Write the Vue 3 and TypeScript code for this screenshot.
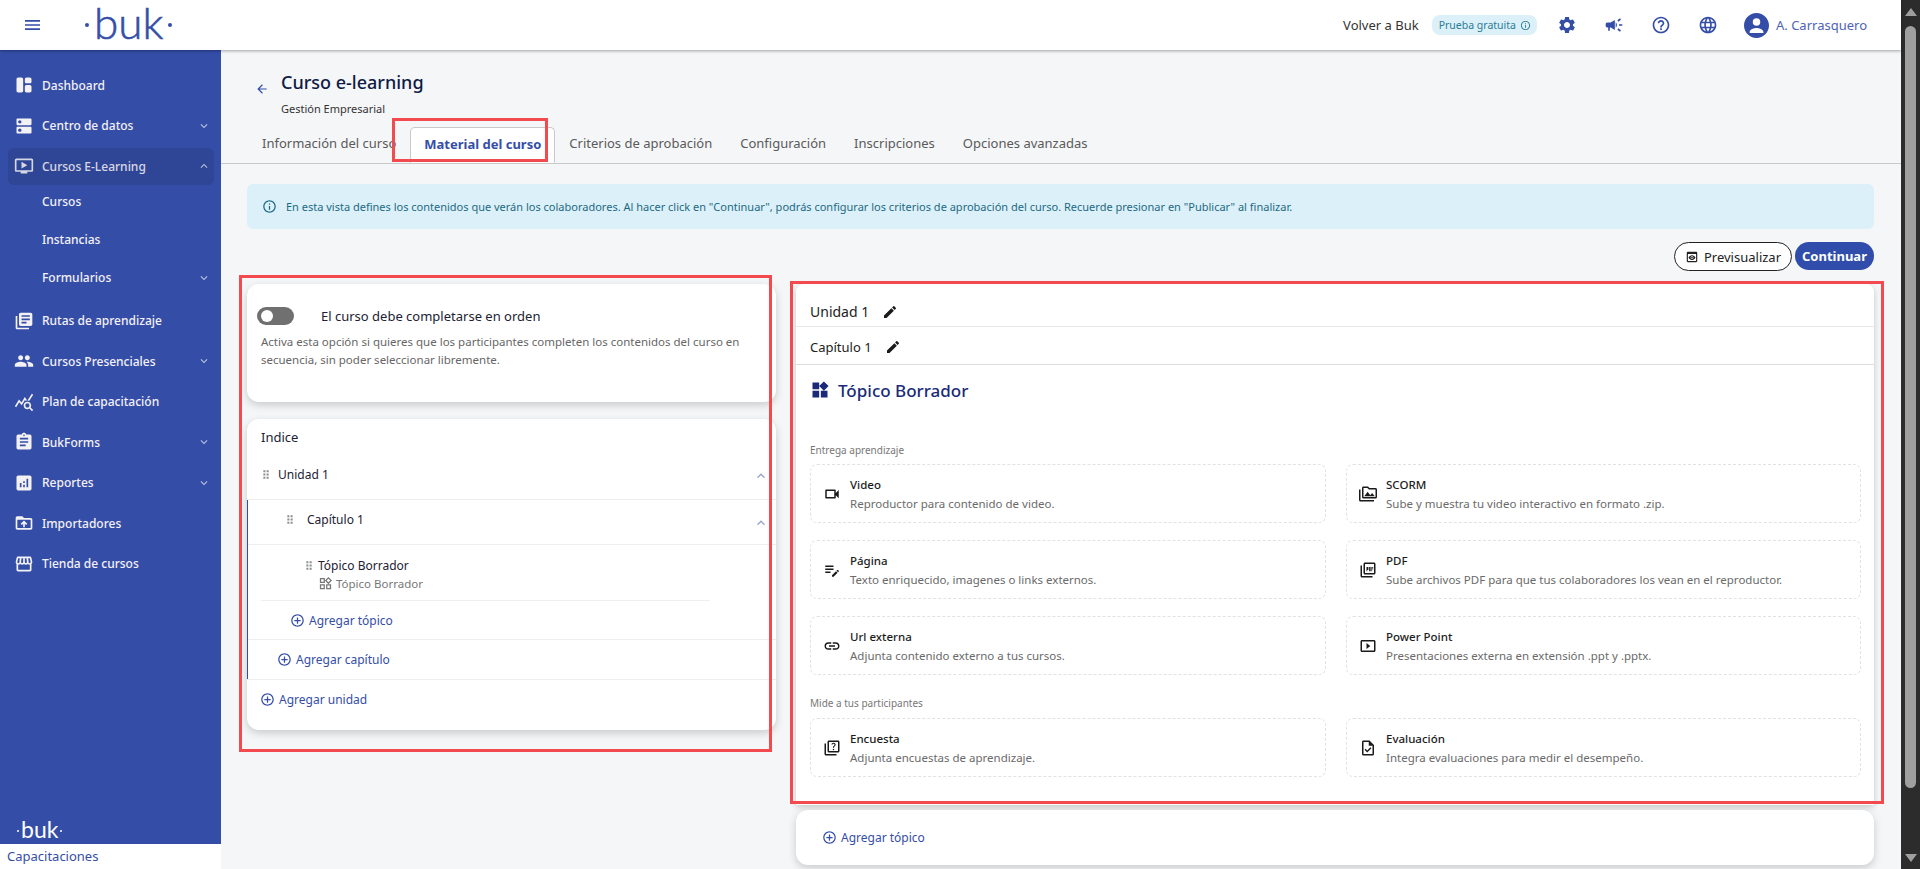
<script setup lang="ts">
const icons: Record<string, string> = {
  menu: 'M3 18h18v-2H3v2zm0-5h18v-2H3v2zm0-7v2h18V6H3z',
  dashboard: 'M9 21H5c-1.1 0-2-.9-2-2V5c0-1.1.9-2 2-2h4c1.1 0 2 .9 2 2v14c0 1.1-.9 2-2 2zm6 0h4c1.1 0 2-.9 2-2v-5c0-1.1-.9-2-2-2h-4c-1.1 0-2 .9-2 2v5c0 1.1.9 2 2 2zm6-13V5c0-1.1-.9-2-2-2h-4c-1.1 0-2 .9-2 2v3c0 1.1.9 2 2 2h4c1.1 0 2-.9 2-2z',
  dns: 'M20 13H4c-.55 0-1 .45-1 1v6c0 .55.45 1 1 1h16c.55 0 1-.45 1-1v-6c0-.55-.45-1-1-1zM7 19c-1.1 0-2-.9-2-2s.9-2 2-2 2 .9 2 2-.9 2-2 2zM20 3H4c-.55 0-1 .45-1 1v6c0 .55.45 1 1 1h16c.55 0 1-.45 1-1V4c0-.55-.45-1-1-1zM7 9c-1.1 0-2-.9-2-2s.9-2 2-2 2 .9 2 2-.9 2-2 2z',
  ondemand: 'M21 3H3c-1.11 0-2 .89-2 2v12c0 1.1.89 2 2 2h5v2h8v-2h5c1.1 0 1.99-.9 1.99-2L23 5c0-1.11-.9-2-2-2zm0 14H3V5h18v12zM16 11l-7 4V7z',
  books: 'M4 6H2v14c0 1.1.9 2 2 2h14v-2H4V6zm16-4H8c-1.1 0-2 .9-2 2v12c0 1.1.9 2 2 2h12c1.1 0 2-.9 2-2V4c0-1.1-.9-2-2-2zm-1 9H9V9h10v2zm-4 4H9v-2h6v2zm4-8H9V5h10v2z',
  people: 'M16 11c1.66 0 2.99-1.34 2.99-3S17.66 5 16 5c-1.66 0-3 1.34-3 3s1.34 3 3 3zm-8 0c1.66 0 2.99-1.34 2.99-3S9.66 5 8 5C6.34 5 5 6.34 5 8s1.34 3 3 3zm0 2c-2.33 0-7 1.17-7 3.5V19h14v-2.5c0-2.33-4.67-3.5-7-3.5zm8 0c-.29 0-.62.02-.97.05 1.16.84 1.97 1.97 1.97 3.45V19h6v-2.5c0-2.33-4.67-3.5-7-3.5z',
  stats: 'M19.88 18.47c.44-.7.7-1.51.7-2.39 0-2.49-2.01-4.5-4.5-4.5s-4.5 2.01-4.5 4.5 2.01 4.5 4.49 4.5c.88 0 1.7-.26 2.39-.7L21.58 23 23 21.58l-3.12-3.11zm-3.8.11c-1.38 0-2.5-1.12-2.5-2.5s1.12-2.5 2.5-2.5 2.5 1.12 2.5 2.5-1.12 2.5-2.5 2.5zm-.36-8.5c-.74.02-1.45.18-2.1.45l-.55-.83-3.8 6.18-3.01-3.52-3.63 5.81L1 17l5-8 3 3.5L13 6l2.72 4.08zm2.59.5c-.64-.28-1.33-.45-2.05-.49L21.38 2 23 3.18l-4.69 7.4z',
  assignment: 'M19 3h-4.18C14.4 1.84 13.3 1 12 1c-1.3 0-2.4.84-2.82 2H5c-1.1 0-2 .9-2 2v14c0 1.1.9 2 2 2h14c1.1 0 2-.9 2-2V5c0-1.1-.9-2-2-2zm-7 0c.55 0 1 .45 1 1s-.45 1-1 1-1-.45-1-1 .45-1 1-1zm2 14H7v-2h7v2zm3-4H7v-2h10v2zm0-4H7V7h10v2z',
  analytics: 'M19 3H5c-1.1 0-2 .9-2 2v14c0 1.1.9 2 2 2h14c1.1 0 2-.9 2-2V5c0-1.1-.9-2-2-2zM9 17H7v-5h2v5zm4 0h-2v-3h2v3zm0-5h-2v-2h2v2zm4 5h-2V7h2v10z',
  folderUp: 'M20 6h-8l-2-2H4c-1.1 0-1.99.9-1.99 2L2 18c0 1.1.9 2 2 2h16c1.1 0 2-.9 2-2V8c0-1.1-.9-2-2-2zm0 12H4V8h16v10zM9.41 14.42 11 12.84V17h2v-4.16l1.59 1.59L16 13.01 12.01 9 8 13.01l1.41 1.41z',
  store: 'M21.9 8.89l-1.05-4.37c-.22-.9-1-1.52-1.91-1.52H5.05c-.9 0-1.69.63-1.9 1.52L2.1 8.89c-.24 1.02-.02 2.06.62 2.88.08.11.19.19.28.29V19c0 1.1.9 2 2 2h14c1.1 0 2-.9 2-2v-6.94c.09-.09.2-.18.28-.28.64-.82.87-1.87.62-2.89zm-2.99-3.9l1.05 4.37c.1.42.01.84-.25 1.17-.14.18-.44.47-.94.47-.61 0-1.14-.49-1.21-1.14L16.98 5l1.93-.01zM13 5h1.96l.54 4.52c.05.39-.07.78-.33 1.07-.22.26-.54.41-.95.41-.67 0-1.22-.59-1.22-1.31V5zM8.49 9.52L9.04 5H11v4.69c0 .72-.55 1.31-1.29 1.31-.34 0-.65-.15-.89-.41-.25-.29-.37-.68-.33-1.07zm-4.45-.16L5.05 5h1.97l-.58 4.86c-.08.65-.6 1.14-1.21 1.14-.49 0-.8-.29-.93-.47-.27-.32-.36-.75-.26-1.17zM5 19v-6.03c.08.01.15.03.23.03.87 0 1.66-.36 2.24-.95.6.6 1.4.95 2.31.95.87 0 1.65-.36 2.23-.93.59.57 1.39.93 2.29.93.84 0 1.64-.35 2.24-.95.58.59 1.37.95 2.24.95.08 0 .15-.02.23-.03V19H5z',
  settings: 'M19.14 12.94c.04-.3.06-.61.06-.94 0-.32-.02-.64-.07-.94l2.03-1.58c.18-.14.23-.41.12-.61l-1.92-3.32c-.12-.22-.37-.29-.59-.22l-2.39.96c-.5-.38-1.03-.7-1.62-.94l-.36-2.54c-.04-.24-.24-.41-.48-.41h-3.84c-.24 0-.43.17-.47.41l-.36 2.54c-.59.24-1.13.57-1.62.94l-2.39-.96c-.22-.08-.47 0-.59.22L2.74 8.87c-.12.21-.08.47.12.61l2.03 1.58c-.05.3-.09.63-.09.94s.02.64.07.94l-2.03 1.58c-.18.14-.23.41-.12.61l1.92 3.32c.12.22.37.29.59.22l2.39-.96c.5.38 1.03.7 1.62.94l.36 2.54c.05.24.24.41.48.41h3.84c.24 0 .44-.17.47-.41l.36-2.54c.59-.24 1.13-.56 1.62-.94l2.39.96c.22.08.47 0 .59-.22l1.92-3.32c.12-.22.07-.47-.12-.61l-2.01-1.58zM12 15.6c-1.98 0-3.6-1.62-3.6-3.6s1.62-3.6 3.6-3.6 3.6 1.62 3.6 3.6-1.62 3.6-3.6 3.6z',
  campaign: 'M18 11v2h4v-2h-4zm-2 6.61c.96.71 2.21 1.65 3.2 2.39.4-.53.8-1.07 1.2-1.6-.99-.74-2.24-1.68-3.2-2.4-.4.54-.8 1.08-1.2 1.61zM20.4 5.6c-.4-.53-.8-1.07-1.2-1.6-.99.74-2.24 1.68-3.2 2.4.4.53.8 1.07 1.2 1.6.96-.72 2.21-1.65 3.2-2.4zM4 9c-1.1 0-2 .9-2 2v2c0 1.1.9 2 2 2h1v4h2v-4h1l5 3V6L8 9H4zm11.5 3c0-1.33-.58-2.53-1.5-3.35v6.69c.92-.81 1.5-2.01 1.5-3.34z',
  help: 'M11 18h2v-2h-2v2zm1-16C6.48 2 2 6.48 2 12s4.48 10 10 10 10-4.48 10-10S17.52 2 12 2zm0 18c-4.41 0-8-3.59-8-8s3.59-8 8-8 8 3.59 8 8-3.59 8-8 8zm0-14c-2.21 0-4 1.79-4 4h2c0-1.1.9-2 2-2s2 .9 2 2c0 2-3 1.75-3 5h2c0-2.25 3-2.5 3-5 0-2.21-1.79-4-4-4z',
  language: 'M11.99 2C6.47 2 2 6.48 2 12s4.47 10 9.99 10C17.52 22 22 17.52 22 12S17.52 2 11.99 2zm6.93 6h-2.95c-.32-1.25-.78-2.45-1.38-3.56 1.84.63 3.37 1.91 4.33 3.56zM12 4.04c.83 1.2 1.48 2.53 1.91 3.96h-3.82c.43-1.43 1.08-2.76 1.91-3.96zM4.26 14C4.1 13.36 4 12.69 4 12s.1-1.36.26-2h3.38c-.08.66-.14 1.32-.14 2 0 .68.06 1.34.14 2H4.26zm.82 2h2.95c.32 1.25.78 2.45 1.38 3.56-1.84-.63-3.37-1.9-4.33-3.56zm2.95-8H5.08c.96-1.66 2.49-2.93 4.33-3.56C8.81 5.55 8.35 6.75 8.03 8zM12 19.96c-.83-1.2-1.48-2.53-1.91-3.96h3.82c-.43 1.43-1.08 2.76-1.91 3.96zM14.34 14H9.66c-.09-.66-.16-1.32-.16-2 0-.68.07-1.35.16-2h4.68c.09.65.16 1.32.16 2 0 .68-.07 1.34-.16 2zm.25 5.56c.6-1.11 1.06-2.31 1.38-3.56h2.95c-.96 1.65-2.49 2.93-4.33 3.56zM16.36 14c.08-.66.14-1.32.14-2 0-.68-.06-1.34-.14-2h3.38c.16.64.26 1.31.26 2s-.1 1.36-.26 2h-3.38z',
  account: 'M12 2C6.48 2 2 6.48 2 12s4.48 10 10 10 10-4.48 10-10S17.52 2 12 2zm0 4.2a3 3 0 1 1 0 6 3 3 0 0 1 0-6zM6.5 17.2c0-2.1 3.7-3.2 5.5-3.2s5.5 1.1 5.5 3.2v.8h-11v-.8z',
  info: 'M11 7h2v2h-2zm0 4h2v6h-2zm1-9C6.48 2 2 6.48 2 12s4.48 10 10 10 10-4.48 10-10S17.52 2 12 2zm0 18c-4.41 0-8-3.59-8-8s3.59-8 8-8 8 3.59 8 8-3.59 8-8 8z',
  back: 'M20 11H7.83l5.59-5.59L12 4l-8 8 8 8 1.41-1.41L7.83 13H20v-2z',
  down: 'M7.41 8.59 12 13.17l4.59-4.58L18 10l-6 6-6-6z',
  up: 'M12 8l-6 6 1.41 1.41L12 10.83l4.59 4.58L18 14z',
  widgets: 'M13 13v8h8v-8h-8zM3 21h8v-8H3v8zM3 3v8h8V3H3zm13.66-1.31L11 7.34 16.66 13l5.66-5.66-5.66-5.65z',
  widgetsLine: 'M16.66 4.52l2.83 2.83-2.83 2.83-2.83-2.83 2.83-2.83M9 5v4H5V5h4m10 10v4h-4v-4h4M9 15v4H5v-4h4m7.66-13.31L11 7.34 16.66 13l5.66-5.66-5.66-5.65zM11 3H3v8h8V3zm10 10h-8v8h8v-8zm-10 0H3v8h8v-8z',
  add: 'M13 7h-2v4H7v2h4v4h2v-4h4v-2h-4V7zm-1-5C6.48 2 2 6.48 2 12s4.48 10 10 10 10-4.48 10-10S17.52 2 12 2zm0 18c-4.41 0-8-3.59-8-8s3.59-8 8-8 8 3.59 8 8-3.59 8-8 8z',
  edit: 'M3 17.25V21h3.75L17.81 9.94l-3.75-3.75L3 17.25zM20.71 7.04c.39-.39.39-1.02 0-1.41l-2.34-2.34c-.39-.39-1.02-.39-1.41 0l-1.83 1.83 3.75 3.75 1.83-1.83z',
  video: 'M15 8v8H5V8h10m1-2H4c-.55 0-1 .45-1 1v10c0 .55.45 1 1 1h12c.55 0 1-.45 1-1v-3.5l4 4v-11l-4 4V7c0-.55-.45-1-1-1z',
  media: 'M2 6H0v5h.01L0 20c0 1.1.9 2 2 2h18v-2H2V6zm5 9h14l-3.5-4.5-2.5 3.01L11.5 9zM22 4h-8l-2-2H6c-1.1 0-1.99.9-1.99 2L4 16c0 1.1.9 2 2 2h16c1.1 0 2-.9 2-2V6c0-1.1-.9-2-2-2zm0 12H6V4h5.17l1.41 1.41.59.59H22v10z',
  note: 'M3 10h11v2H3v-2zm0-2h11V6H3v2zm0 8h7v-2H3v2zm15.01-3.13.71-.71c.39-.39 1.02-.39 1.41 0l.71.71c.39.39.39 1.02 0 1.41l-.71.71-2.12-2.12zm-.71.71-5.3 5.3V21h2.12l5.3-5.3-2.12-2.12z',
  pdf: 'M20 2H8c-1.1 0-2 .9-2 2v12c0 1.1.9 2 2 2h12c1.1 0 2-.9 2-2V4c0-1.1-.9-2-2-2zm0 14H8V4h12v12zM4 6H2v14c0 1.1.9 2 2 2h14v-2H4V6zm6 2h2.5v4H11v1.5h-1V8zm3.5 0h2v5.5h-2V8zm3 0H19v1h-1.5v1H19v1h-1.5v2.500h-1V8z',
  link: 'M3.9 12c0-1.71 1.39-3.1 3.1-3.1h4V7H7c-2.76 0-5 2.24-5 5s2.24 5 5 5h4v-1.9H7c-1.71 0-3.1-1.39-3.1-3.1zM8 13h8v-2H8v2zm9-6h-4v1.9h4c1.71 0 3.1 1.39 3.1 3.1s-1.39 3.1-3.1 3.1h-4V17h4c2.76 0 5-2.24 5-5s-2.24-5-5-5z',
  slides: 'M10 8v8l5-4-5-4zm10-4H4c-1.1 0-2 .9-2 2v12c0 1.1.9 2 2 2h16c1.1 0 2-.9 2-2V6c0-1.1-.9-2-2-2zm0 14H4V6h16v12z',
  quiz: 'M4 6H2v14c0 1.1.9 2 2 2h14v-2H4V6zm16-4H8c-1.1 0-2 .9-2 2v12c0 1.1.9 2 2 2h12c1.1 0 2-.9 2-2V4c0-1.1-.9-2-2-2zm0 14H8V4h12v12zm-6.49-5.84c.41-.73 1.18-1.16 1.63-1.8.48-.68.21-1.94-1.14-1.94-.88 0-1.32.67-1.5 1.23l-1.37-.57C11.51 5.96 12.52 5 13.99 5c1.23 0 2.08.56 2.51 1.26.37.6.58 1.73.01 2.57-.63.93-1.23 1.21-1.56 1.81-.13.24-.18.4-.18 1.18h-1.52c.01-.41-.06-1.08.26-1.66zm-.56 3.79c0-.59.47-1.04 1.05-1.04.59 0 1.04.45 1.04 1.04 0 .58-.44 1.05-1.04 1.05-.58 0-1.05-.47-1.05-1.05z',
  task: 'M14 2H6c-1.1 0-1.99.9-1.99 2L4 20c0 1.1.89 2 1.99 2H18c1.1 0 2-.9 2-2V8l-6-6zm4 18H6V4h7v5h5v11zm-9.18-6.95L7.4 14.46 10.94 18l5.66-5.66-1.41-1.41-4.24 4.24-2.13-2.12z',
  preview: 'M19 3H5c-1.11 0-2 .9-2 2v14c0 1.1.89 2 2 2h14c1.1 0 2-.9 2-2V5c0-1.1-.89-2-2-2zm0 16H5V7h14v12zm-5.5-6c0 .83-.67 1.5-1.5 1.5s-1.5-.67-1.5-1.5.67-1.5 1.5-1.5 1.5.67 1.5 1.5zM12 9c-2.73 0-5.06 1.66-6 4 .94 2.34 3.27 4 6 4s5.06-1.66 6-4c-.94-2.34-3.27-4-6-4zm0 6.5c-1.38 0-2.5-1.12-2.5-2.5s1.12-2.5 2.5-2.5 2.5 1.12 2.5 2.5-1.12 2.5-2.5 2.5z',
  drag: 'M3 3h5v5H3zM11 3h5v5h-5zM3 11h5v5H3zM11 11h5v5h-5zM3 19h5v5H3zM11 19h5v5h-5z'
}

const menu = [
  { label: 'Dashboard', icon: 'dashboard' },
  { label: 'Centro de datos', icon: 'dns', caret: 'down' },
  { label: 'Cursos E-Learning', icon: 'ondemand', caret: 'up', active: true },
  { label: 'Rutas de aprendizaje', icon: 'books' },
  { label: 'Cursos Presenciales', icon: 'people', caret: 'down' },
  { label: 'Plan de capacitación', icon: 'stats' },
  { label: 'BukForms', icon: 'assignment', caret: 'down' },
  { label: 'Reportes', icon: 'analytics', caret: 'down' },
  { label: 'Importadores', icon: 'folderUp' },
  { label: 'Tienda de cursos', icon: 'store' }
]

const tabs = [
  'Información del curso',
  'Material del curso',
  'Criterios de aprobación',
  'Configuración',
  'Inscripciones',
  'Opciones avanzadas'
]

const delivery = [
  { title: 'Video', text: 'Reproductor para contenido de video.', icon: 'video' },
  { title: 'SCORM', text: 'Sube y muestra tu video interactivo en formato .zip.', icon: 'media' },
  { title: 'Página', text: 'Texto enriquecido, imagenes o links externos.', icon: 'note' },
  { title: 'PDF', text: 'Sube archivos PDF para que tus colaboradores los vean en el reproductor.', icon: 'pdf' },
  { title: 'Url externa', text: 'Adjunta contenido externo a tus cursos.', icon: 'link' },
  { title: 'Power Point', text: 'Presentaciones externa en extensión .ppt y .pptx.', icon: 'slides' }
]

const measure = [
  { title: 'Encuesta', text: 'Adjunta encuestas de aprendizaje.', icon: 'quiz' },
  { title: 'Evaluación', text: 'Integra evaluaciones para medir el desempeño.', icon: 'task' }
]
</script>

<template>
  <div class="page">
    <div class="shell">
      <header class="topbar">
        <svg class="burger" viewBox="3 6 18 12"><path :d="icons.menu" /></svg>
        <div class="logo"><i></i><span>buk</span><i></i></div>
        <div class="topbar__right">
          <span class="back-link">Volver a Buk</span>
          <span class="trial">Prueba gratuita <svg viewBox="0 0 24 24"><path :d="icons.info" /></svg></span>
          <svg class="top-icon" viewBox="0 0 24 24"><path :d="icons.settings" /></svg>
          <svg class="top-icon" viewBox="0 0 24 24"><path :d="icons.campaign" /></svg>
          <svg class="top-icon" viewBox="0 0 24 24"><path :d="icons.help" /></svg>
          <svg class="top-icon" viewBox="0 0 24 24"><path :d="icons.language" /></svg>
          <svg class="avatar" viewBox="2 2 20 20"><path :d="icons.account" /></svg>
          <span class="user">A. Carrasquero</span>
        </div>
      </header>

      <div class="body">
        <aside class="side">
          <nav class="side__nav">
            <template v-for="item in menu" :key="item.label">
              <div class="side__item" :class="{ 'side__item--active': item.active }">
                <svg class="side__icon" viewBox="0 0 24 24"><path :d="icons[item.icon]" /></svg>
                <span>{{ item.label }}</span>
                <svg v-if="item.caret" class="side__caret" viewBox="0 0 24 24"><path :d="icons[item.caret]" /></svg>
              </div>
              <div v-if="item.active" class="side__sub">
                <div class="side__subitem">Cursos</div>
                <div class="side__subitem">Instancias</div>
                <div class="side__subitem">
                  Formularios
                  <svg class="side__caret" viewBox="0 0 24 24"><path :d="icons.down" /></svg>
                </div>
              </div>
            </template>
          </nav>
          <div class="side__logo"><i></i><span>buk</span><i></i></div>
          <div class="side__module">Capacitaciones</div>
        </aside>

        <main class="main">
          <div class="head">
            <svg class="head__back" viewBox="0 0 24 24"><path :d="icons.back" /></svg>
            <div>
              <h1>Curso e-learning</h1>
              <p>Gestión Empresarial</p>
            </div>
          </div>

          <div class="tabs">
            <div v-for="(tab, i) in tabs" :key="tab" class="tab" :class="{ 'tab--active': i === 1 }">{{ tab }}</div>
          </div>

          <div class="content">
            <div class="alert">
              <svg viewBox="0 0 24 24"><path :d="icons.info" /></svg>
              En esta vista defines los contenidos que verán los colaboradores. Al hacer click en "Continuar", podrás configurar los criterios de aprobación del curso. Recuerde presionar en "Publicar" al finalizar.
            </div>

            <div class="actions">
              <button type="button" class="btn btn--ghost">
                <svg viewBox="0 0 24 24"><path :d="icons.preview" /></svg>
                Previsualizar
              </button>
              <button type="button" class="btn btn--primary">Continuar</button>
            </div>

            <div class="columns">
              <div class="left">
                <section class="card order">
                  <div class="order__row">
                    <span class="switch"><i></i></span>
                    <span>El curso debe completarse en orden</span>
                  </div>
                  <p>Activa esta opción si quieres que los participantes completen los contenidos del curso en secuencia, sin poder seleccionar libremente.</p>
                </section>

                <section class="card index">
                  <div class="index__title">Indice</div>
                  <div class="tree-row tree-row--unit">
                    <svg class="drag" viewBox="0 0 19 27"><path :d="icons.drag" /></svg>
                    <span>Unidad 1</span>
                    <svg class="tree-caret" viewBox="0 0 24 24"><path :d="icons.up" /></svg>
                  </div>
                  <div class="chapter">
                    <div class="tree-row tree-row--chapter">
                      <svg class="drag" viewBox="0 0 19 27"><path :d="icons.drag" /></svg>
                      <span>Capítulo 1</span>
                      <svg class="tree-caret" viewBox="0 0 24 24"><path :d="icons.up" /></svg>
                    </div>
                    <div class="topic">
                      <div class="topic__name">
                        <svg class="drag" viewBox="0 0 19 27"><path :d="icons.drag" /></svg>
                        <span>Tópico Borrador</span>
                      </div>
                      <div class="topic__type">
                        <svg viewBox="0 0 24 24"><path :d="icons.widgetsLine" /></svg>
                        Tópico Borrador
                      </div>
                    </div>
                    <div class="add-row add-row--topic">
                      <svg viewBox="0 0 24 24"><path :d="icons.add" /></svg>
                      Agregar tópico
                    </div>
                    <div class="add-row add-row--chapter">
                      <svg viewBox="0 0 24 24"><path :d="icons.add" /></svg>
                      Agregar capítulo
                    </div>
                  </div>
                  <div class="add-row add-row--unit">
                    <svg viewBox="0 0 24 24"><path :d="icons.add" /></svg>
                    Agregar unidad
                  </div>
                </section>
              </div>

              <div class="right">
                <section class="card editor">
                  <div class="crumb crumb--unit">
                    Unidad 1
                    <svg viewBox="0 0 24 24"><path :d="icons.edit" /></svg>
                  </div>
                  <div class="crumb crumb--chapter">
                    Capítulo 1
                    <svg viewBox="0 0 24 24"><path :d="icons.edit" /></svg>
                  </div>
                  <div class="editor__body">
                    <h2>
                      <svg viewBox="0 0 24 24"><path :d="icons.widgets" /></svg>
                      Tópico Borrador
                    </h2>
                    <div class="group-title group-title--first">Entrega aprendizaje</div>
                    <div class="options">
                      <div v-for="opt in delivery" :key="opt.title" class="option">
                        <svg viewBox="0 0 24 24"><path :d="icons[opt.icon]" /></svg>
                        <div>
                          <strong>{{ opt.title }}</strong>
                          <span>{{ opt.text }}</span>
                        </div>
                      </div>
                    </div>
                    <div class="group-title">Mide a tus participantes</div>
                    <div class="options">
                      <div v-for="opt in measure" :key="opt.title" class="option">
                        <svg viewBox="0 0 24 24"><path :d="icons[opt.icon]" /></svg>
                        <div>
                          <strong>{{ opt.title }}</strong>
                          <span>{{ opt.text }}</span>
                        </div>
                      </div>
                    </div>
                  </div>
                </section>

                <section class="card add-topic">
                  <svg viewBox="0 0 24 24"><path :d="icons.add" /></svg>
                  Agregar tópico
                </section>
              </div>
            </div>
          </div>
        </main>
      </div>
    </div>

    <div class="scrollbar">
      <i class="scrollbar__up"></i>
      <b></b>
      <i class="scrollbar__down"></i>
    </div>

    <!-- red marks drawn over the capture -->
    <div class="mark mark--tab"></div>
    <div class="mark mark--left"></div>
    <div class="mark mark--right"></div>
  </div>
</template>

<style scoped>
.page {
  position: relative;
  display: flex;
  width: 1920px;
  height: 869px;
  overflow: hidden;
  background: #f5f6f8;
  font-family: 'Noto Sans', sans-serif;
  color: #1c2233;
}

svg {
  fill: currentColor;
  flex: none;
}

.shell {
  flex: 1;
  min-width: 0;
  display: flex;
  flex-direction: column;
}

.topbar {
  position: relative;
  z-index: 2;
  flex: none;
  height: 50px;
  display: flex;
  align-items: center;
  background: #fff;
  box-shadow: 0 1px 3px rgba(0, 0, 0, 0.35);
  color: #344ea8;
}

.burger {
  width: 15px;
  height: 10px;
  margin-left: 25px;
}

.logo {
  display: flex;
  align-items: center;
  margin-left: 45px;
  color: #344ea8;
}

.logo span {
  font-family: 'Lato', sans-serif;
  font-weight: 300;
  font-size: 44px;
  line-height: 40px;
  margin: -6px 5px 0;
  -webkit-text-stroke: 0.6px #344ea8;
}

.logo i {
  width: 4px;
  height: 4px;
  border-radius: 50%;
  background: currentColor;
}

.topbar__right {
  margin-left: auto;
  display: flex;
  align-items: center;
  padding-right: 34px;
}

.back-link {
  font-size: 13px;
  color: #333;
}

.trial {
  display: flex;
  align-items: center;
  gap: 4px;
  height: 20px;
  margin-left: 13px;
  padding: 0 6px 0 7px;
  border-radius: 8px;
  background: #dcf0f9;
  color: #2a7d97;
  font-size: 10.5px;
}

.trial svg {
  width: 11px;
  height: 11px;
}

.top-icon {
  width: 20px;
  height: 20px;
  margin-left: 27px;
}

.trial + .top-icon {
  margin-left: 20px;
}

.avatar {
  width: 25px;
  height: 25px;
  margin-left: 26px;
}

.user {
  margin-left: 7px;
  font-size: 13px;
  color: #4d64b6;
}

.body {
  flex: 1;
  min-height: 0;
  display: flex;
}

.side {
  flex: none;
  width: 221px;
  display: flex;
  flex-direction: column;
  background: #344ea8;
  color: #f4f1f4;
  font-size: 12px;
  font-weight: 500;
}

.side__nav {
  padding: 15px 7px 0 8px;
}

.side__item {
  position: relative;
  height: 40.5px;
  display: flex;
  align-items: center;
  padding-left: 34px;
}

.side__item--active::before {
  content: '';
  position: absolute;
  inset: 2px 0;
  border-radius: 6px;
  background: #2f4595;
}

.side__item--active > * {
  position: relative;
  opacity: 0.85;
}

.side__icon {
  position: absolute;
  left: 6px;
  top: 50%;
  width: 20px;
  height: 20px;
  margin-top: -10px;
}

.side__caret {
  position: absolute !important;
  right: 3px;
  top: 50%;
  width: 14px;
  height: 14px;
  margin-top: -7px;
  opacity: 0.7;
}

.side__sub {
  margin: -4px 0 4px;
}

.side__subitem {
  position: relative;
  height: 38px;
  display: flex;
  align-items: center;
  padding-left: 34px;
}

.side__logo {
  margin-top: auto;
  height: 26px;
  display: flex;
  align-items: center;
  padding-left: 17px;
  color: #fff;
}

.side__logo span {
  font-family: 'Lato', sans-serif;
  font-weight: 400;
  font-size: 23px;
  line-height: 20px;
  margin: -4px 2px 0;
}

.side__logo i {
  width: 2px;
  height: 2px;
  border-radius: 50%;
  background: currentColor;
}

.side__module {
  height: 25px;
  padding-left: 7px;
  background: #fff;
  color: #344ea8;
  font-size: 13px;
  font-weight: 400;
  line-height: 24px;
}

.main {
  flex: 1;
  min-width: 0;
}

.head {
  display: flex;
  height: 77px;
  padding: 19px 0 0 34px;
  box-sizing: border-box;
}

.head__back {
  width: 14px;
  height: 14px;
  margin: 13px 12px 0 0;
  color: #344ea8;
}

.head h1 {
  margin: 0;
  font-size: 18px;
  font-weight: 500;
  line-height: 26px;
  color: #0f1a45;
}

.head p {
  margin: 7px 0 0;
  font-size: 11px;
  line-height: 14px;
  color: #333;
}

.tabs {
  height: 36px;
  display: flex;
  padding-left: 27px;
  border-bottom: 1px solid #c9c9c9;
}

.tab {
  height: 36px;
  box-sizing: border-box;
  padding: 0 14px;
  font-size: 13px;
  line-height: 33px;
  color: #5a5a5a;
  white-space: nowrap;
}

.tab--active {
  border: 1px solid #c9c9c9;
  border-bottom-color: #fff;
  border-radius: 5px 5px 0 0;
  padding: 0 13px;
  background: #fff;
  color: #344ea8;
  font-weight: 700;
}

.content {
  padding: 20px 27px 0 26px;
}

.alert {
  height: 45px;
  display: flex;
  align-items: center;
  gap: 9px;
  padding-left: 15px;
  border-radius: 6px;
  background: #dcf0f9;
  color: #1c6a82;
  font-size: 11px;
}

.alert svg {
  width: 15px;
  height: 15px;
}

.actions {
  display: flex;
  justify-content: flex-end;
  gap: 3px;
  height: 29px;
  margin: 13px 0;
}

.btn {
  display: flex;
  align-items: center;
  justify-content: center;
  height: 29px;
  padding: 0;
  border-radius: 15px;
  font-family: inherit;
  font-size: 13px;
}

.btn--ghost {
  width: 118px;
  gap: 5px;
  border: 1px solid #222;
  background: #fff;
  color: #222;
}

.btn--ghost svg {
  width: 14px;
  height: 14px;
}

.btn--primary {
  width: 79px;
  height: 28px;
  border: 0;
  background: #304dab;
  color: #fff;
  font-weight: 700;
}

.columns {
  display: grid;
  grid-template-columns: 529px 1078px;
  gap: 20px;
  align-items: start;
}

.left,
.right {
  display: flex;
  flex-direction: column;
}

.left {
  gap: 17px;
}

.right {
  gap: 5px;
}

.card {
  background: #fff;
  border-radius: 12px;
  box-shadow: 0 3px 8px rgba(0, 0, 0, 0.18);
}

.order {
  height: 118px;
  box-sizing: border-box;
  padding: 23px 30px 0 14px;
}

.order__row {
  display: flex;
  align-items: center;
  gap: 27px;
  margin-left: -4px;
  height: 18px;
  font-size: 13px;
}

.switch {
  display: block;
  width: 37px;
  height: 18px;
  border-radius: 9px;
  background: #707070;
  position: relative;
}

.switch i {
  position: absolute;
  left: 4px;
  top: 3px;
  width: 12px;
  height: 12px;
  border-radius: 50%;
  background: #fff;
}

.order p {
  margin: 8px 0 0;
  font-size: 11.5px;
  line-height: 18px;
  color: #666;
}

.index {
  height: 311px;
  box-sizing: border-box;
  padding-top: 9px;
  overflow: hidden;
}

.index__title {
  padding-left: 14px;
  font-size: 13px;
  line-height: 18px;
  margin-bottom: 15px;
}

.tree-row {
  position: relative;
  display: flex;
  align-items: center;
  font-size: 12px;
  border-bottom: 1px solid #eee;
}

.tree-row--unit {
  height: 39px;
  padding: 0 0 11px 15px;
  box-sizing: border-box;
  gap: 8px;
}

.tree-row--chapter {
  height: 45px;
  padding: 0 0 5px 38px;
  box-sizing: border-box;
  gap: 13px;
}

.drag {
  width: 8px;
  height: 11px;
  fill: #8c8c8c;
}

.tree-caret {
  position: absolute;
  right: 7px;
  top: 50%;
  width: 16px;
  height: 16px;
  margin-top: -7px;
  fill: #9aa5d0;
}

.tree-row--unit .tree-caret {
  margin-top: -12px;
}

.chapter {
  border-left: 1px solid #344ea8;
}

.topic {
  margin: 0 66px 0 13px;
  height: 56px;
  padding-top: 11px;
  box-sizing: border-box;
  border-bottom: 1px solid #eee;
}

.topic__name {
  display: flex;
  align-items: center;
  gap: 5px;
  padding-left: 44px;
  height: 18px;
  font-size: 12px;
}

.topic__type {
  display: flex;
  align-items: center;
  gap: 3px;
  padding-left: 57px;
  height: 18px;
  font-size: 11.5px;
  color: #777;
}

.topic__type svg {
  width: 15px;
  height: 15px;
}

.add-row {
  display: flex;
  align-items: center;
  gap: 4px;
  color: #344ea8;
  font-size: 12px;
  border-bottom: 1px solid #eee;
}

.add-row svg {
  width: 15px;
  height: 15px;
}

.add-row--topic {
  height: 38px;
  padding-left: 42px;
}

.add-row--chapter {
  height: 39px;
  padding-left: 29px;
  border-bottom: 0;
}

.add-row--unit {
  height: 38px;
  padding-left: 13px;
  border-bottom: 0;
  border-top: 1px solid #eee;
}

.editor {
  height: 521px;
  border-radius: 8px 8px 0 0;
  box-shadow: 0 2px 6px rgba(0, 0, 0, 0.2);
  overflow: hidden;
}

.crumb {
  display: flex;
  align-items: center;
  padding-left: 14px;
  box-sizing: border-box;
  border-bottom: 1px solid #e8e8e8;
  color: #222;
}

.crumb svg {
  width: 16px;
  height: 16px;
  color: #1a1a1a;
}

.crumb--unit {
  height: 43px;
  padding-top: 13px;
  gap: 13px;
  font-size: 14px;
}

.crumb--chapter {
  height: 38px;
  padding-top: 3px;
  gap: 13px;
  font-size: 13px;
  border-bottom-color: #ddd;
}

.editor__body {
  padding: 0 14px;
}

.editor__body h2 {
  display: flex;
  align-items: center;
  gap: 8px;
  height: 50px;
  margin: 0;
  font-size: 17px;
  font-weight: 500;
  color: #1a2a78;
}

.editor__body h2 svg {
  width: 20px;
  height: 20px;
}

.group-title {
  font-size: 10px;
  line-height: 14px;
  color: #777;
  margin: 21px 0 8px;
}

.group-title--first {
  margin: 28px 0 7px;
}

.options {
  display: grid;
  grid-template-columns: 516px 515px;
  gap: 17px 20px;
}

.option {
  height: 59px;
  box-sizing: border-box;
  display: flex;
  align-items: center;
  gap: 9px;
  padding-left: 12px;
  border: 1px dashed #e2e2e2;
  border-radius: 7px;
}

.option svg {
  width: 18px;
  height: 18px;
  color: #1a1a1a;
}

.option strong,
.option span {
  display: block;
  font-size: 11.5px;
  line-height: 19px;
}

.option strong {
  font-weight: 500;
  color: #1c1c1c;
}

.option span {
  color: #6a6a6a;
}

.add-topic {
  height: 55px;
  display: flex;
  align-items: center;
  gap: 4px;
  padding-left: 26px;
  font-size: 12px;
  color: #344ea8;
}

.add-topic svg {
  width: 15px;
  height: 15px;
}

.scrollbar {
  flex: none;
  width: 19px;
  position: relative;
  background: #2c2c2c;
}

.scrollbar b {
  position: absolute;
  left: 4px;
  right: 4px;
  top: 26px;
  height: 762px;
  border-radius: 6px;
  background: #9f9f9f;
}

.scrollbar__up,
.scrollbar__down {
  position: absolute;
  left: 4px;
  width: 0;
  height: 0;
  border-left: 6px solid transparent;
  border-right: 6px solid transparent;
}

.scrollbar__up {
  top: 8px;
  border-bottom: 8px solid #9f9f9f;
}

.scrollbar__down {
  bottom: 7px;
  border-top: 8px solid #9f9f9f;
}

.mark {
  position: absolute;
  z-index: 5;
  box-sizing: border-box;
  border: 3px solid #f24a4e;
  pointer-events: none;
}

.mark--tab {
  left: 392px;
  top: 118px;
  width: 156px;
  height: 44px;
}

.mark--left {
  left: 239px;
  top: 275px;
  width: 533px;
  height: 477px;
}

.mark--right {
  left: 790px;
  top: 281px;
  width: 1094px;
  height: 523px;
}
</style>

<style>
html,
body {
  margin: 0;
}
</style>
